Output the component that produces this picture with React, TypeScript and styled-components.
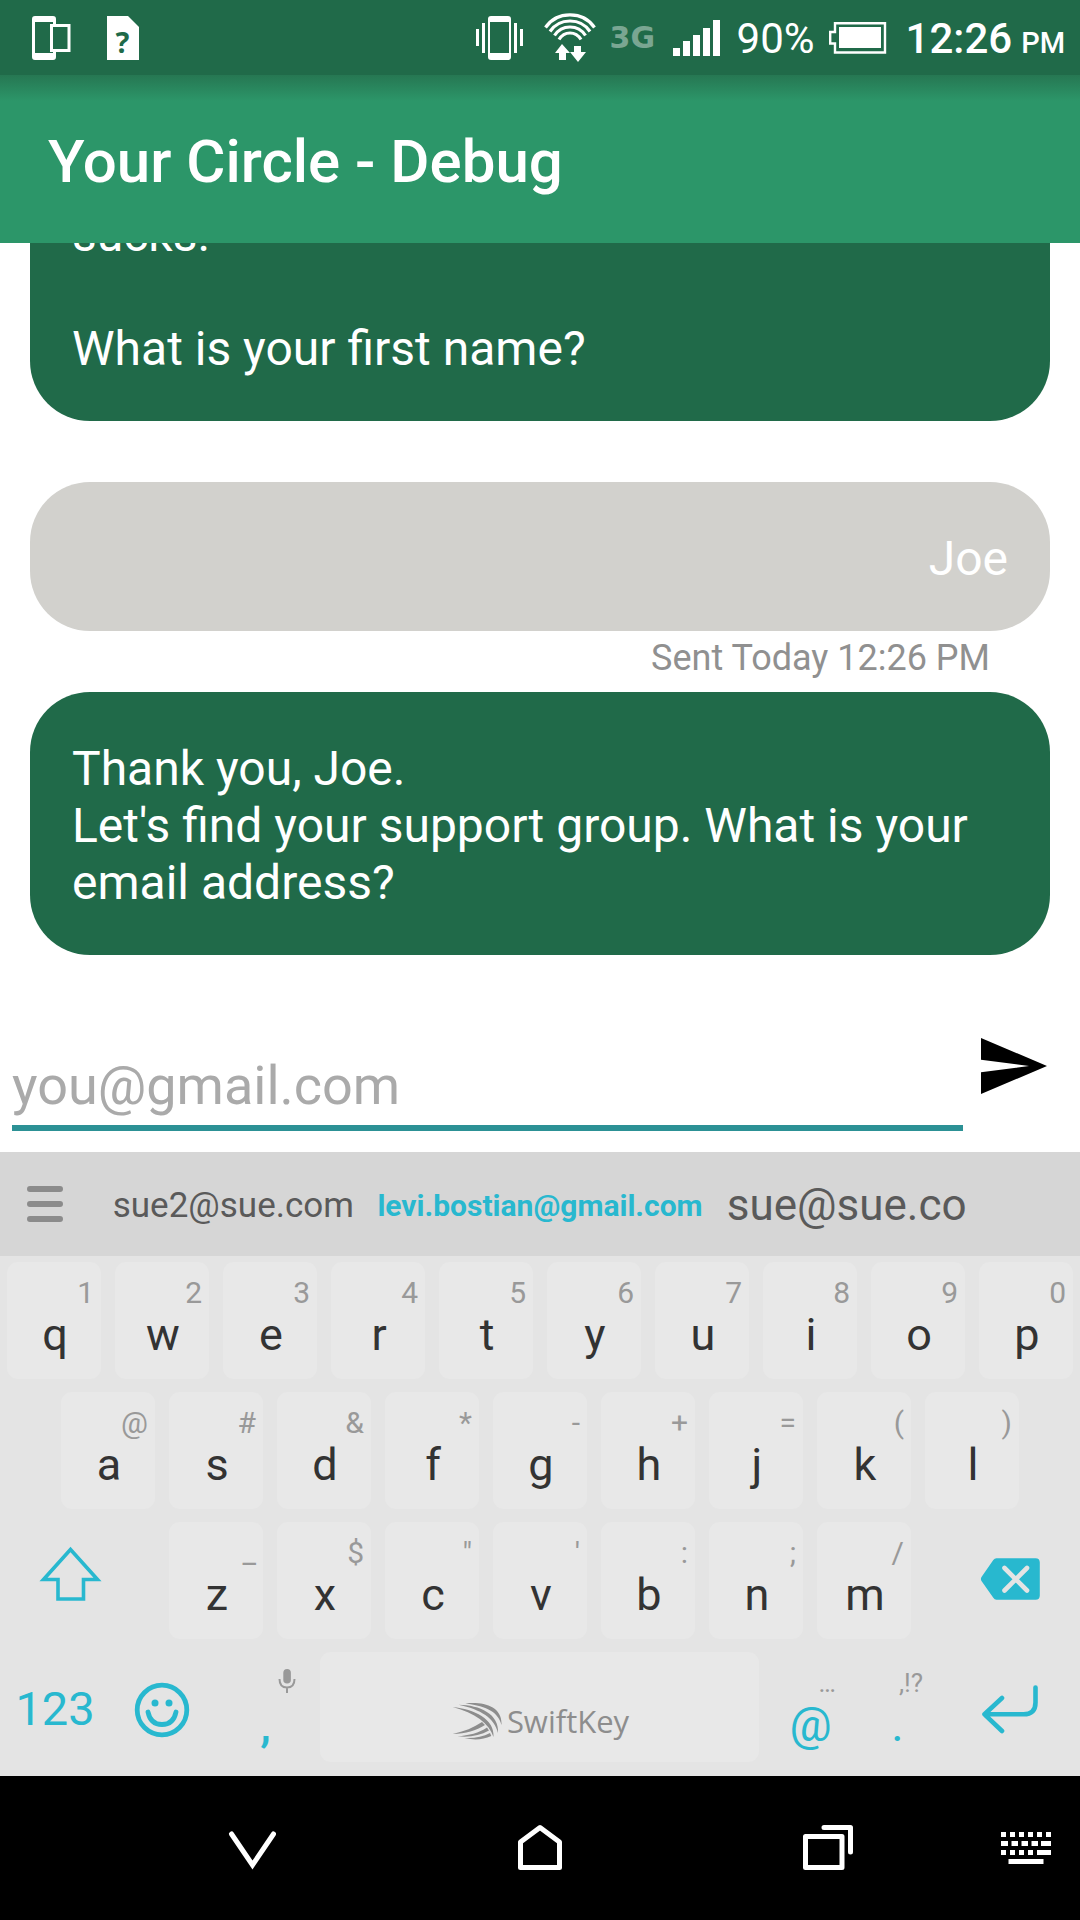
import React from "react";
import styled, { createGlobalStyle } from "styled-components";

const color = {
  statusBar: "#206a49",
  appBar: "#2c9669",
  bubble: "#206a49",
  reply: "#d2d1cd",
  meta: "#909090",
  underline: "#2c9195",
  placeholder: "#aaaaaa",
  suggestions: "#d6d6d6",
  board: "#e4e4e4",
  key: "#e8e8e8",
  letter: "#333333",
  hint: "#999999",
  accent: "#28b8cf",
};

const GlobalStyle = createGlobalStyle`
  *, *::before, *::after { box-sizing: border-box; }
  body { margin: 0; font-family: Roboto, "Liberation Sans", sans-serif; background: #fff; }
  button, input { font: inherit; border: 0; padding: 0; background: none; color: inherit; }
  svg { display: block; flex: none; }
`;

const Screen = styled.div`
  display: flex;
  flex-direction: column;
  height: 100vh;
  overflow: hidden;
`;

const StatusBar = styled.div`
  display: flex;
  flex: none;
  align-items: center;
  justify-content: space-between;
  height: 75px;
  padding: 0 15px 0 32px;
  background: ${color.statusBar};
  color: #fff;
`;

const StatusGroup = styled.div<{ $gap: number }>`
  display: flex;
  align-items: center;
  gap: ${(p) => p.$gap}px;
`;

const Network = styled.span`
  width: 49px;
  font: bold 30px "DejaVu Sans", sans-serif;
  color: rgba(255, 255, 255, 0.42);
`;

const Percent = styled.span`
  padding-top: 3px;
  font-size: 42px;
  line-height: 48px;
`;

const Clock = styled.time`
  padding-top: 3px;
  font-size: 42px;
  line-height: 48px;
  font-weight: 500;
`;

const Meridiem = styled.small`
  margin-left: 9px;
  font-size: 29px;
  line-height: 30px;
`;

const AppBar = styled.header`
  display: flex;
  flex: none;
  align-items: center;
  height: 168px;
  padding: 6px 48px 0;
  background: linear-gradient(rgba(32, 88, 60, 0.5), rgba(32, 88, 60, 0) 26px) ${color.appBar};
`;

const Title = styled.h1`
  margin: 0;
  font-size: 60px;
  line-height: 70px;
  font-weight: 500;
  color: #fff;
`;

const Chat = styled.main`
  display: flex;
  flex: 1 1 0;
  flex-direction: column;
  justify-content: flex-end;
  min-height: 0;
  padding: 0 30px;
  overflow: hidden;
`;

const Message = styled.article`
  flex: none;
`;

const Bubble = styled.p<{ $own?: boolean }>`
  margin: 0;
  padding: 48px 42px 44px;
  border-radius: 60px;
  background: ${(p) => (p.$own ? color.reply : color.bubble)};
  color: #fff;
  font-size: 48px;
  line-height: 57px;
  text-align: ${(p) => (p.$own ? "right" : "left")};
  white-space: pre-line;
`;

const Meta = styled.div`
  height: 61px;
  padding: 6px 60px 0;
  font-size: 36px;
  line-height: 42px;
  text-align: right;
  color: ${color.meta};
`;

const Composer = styled.form`
  display: flex;
  flex: none;
  align-items: flex-start;
  height: 136px;
  padding: 0 16px 21px 12px;
`;

const EmailInput = styled.input`
  flex: 1;
  min-width: 0;
  height: 115px;
  padding: 32px 0 2px;
  border-bottom: 6px solid ${color.underline};
  border-radius: 0;
  outline: 0;
  font-size: 54px;
  color: #222;
  &::placeholder {
    color: ${color.placeholder};
    opacity: 1;
  }
`;

const SendButton = styled.button`
  display: flex;
  align-items: center;
  justify-content: center;
  width: 101px;
  height: 100px;
`;

const SuggestionBar = styled.div`
  display: flex;
  flex: none;
  align-items: center;
  height: 104px;
  padding-right: 80px;
  background: ${color.suggestions};
`;

const MenuButton = styled.button`
  display: flex;
  justify-content: center;
  width: 80px;
  padding-left: 10px;
`;

const Suggestion = styled.button<{ $size: number; $primary?: boolean }>`
  display: flex;
  flex: 1 1 0;
  justify-content: center;
  min-width: 0;
  padding-top: 2px;
  font-size: ${(p) => p.$size}px;
  font-weight: ${(p) => (p.$primary ? 700 : 400)};
  color: ${(p) => (p.$primary ? color.accent : "#5a5a5a")};
`;

const Board = styled.section`
  flex: none;
  background: ${color.board};
`;

const Row = styled.div<{ $inset?: boolean; $last?: boolean }>`
  display: flex;
  height: 130px;
  padding: ${(p) => `6px ${p.$inset ? "5%" : "0"} ${p.$last ? 14 : 7}px`};
`;

const Cell = styled.div<{ $units: number }>`
  display: flex;
  flex: ${(p) => p.$units} 1 0;
  min-width: 0;
`;

const Spacer = styled.div`
  flex: 22 1 0;
`;

const Key = styled.button<{ $flat?: boolean }>`
  position: relative;
  display: flex;
  flex: 1;
  align-items: center;
  justify-content: center;
  min-width: 0;
  margin: 0 7px;
  padding-left: 2px;
  border-radius: 11px;
  background: ${(p) => (p.$flat ? "transparent" : color.key)};
`;

const Letter = styled.span<{ $accent?: boolean }>`
  align-self: flex-start;
  padding-top: 46px;
  font-size: ${(p) => (p.$accent ? 47 : 45)}px;
  line-height: 54px;
  color: ${(p) => (p.$accent ? color.accent : color.letter)};
`;

const CommaLetter = styled(Letter)`
  font-weight: 500;
`;

const Hint = styled.span<{ $small?: boolean }>`
  position: absolute;
  top: 13px;
  right: ${(p) => (p.$small ? 10 : 7)}px;
  font-size: ${(p) => (p.$small ? 26 : 30)}px;
  line-height: 36px;
  color: ${color.hint};
`;

const MicHint = styled(Hint)`
  top: 17px;
`;

const ModeLabel = styled.span`
  padding-top: 4px;
  font-size: 47px;
  line-height: 54px;
  color: ${color.accent};
`;

const Brand = styled.span`
  display: flex;
  align-items: center;
  gap: 5px;
  padding-top: 27px;
  font-family: "Open Sans", "Noto Sans", sans-serif;
  font-size: 31px;
  line-height: 38px;
  color: #8d8d8d;
`;

const NavBar = styled.nav`
  display: flex;
  flex: none;
  height: 144px;
  padding-left: 10%;
  background: #000;
`;

const NavButton = styled.button<{ $units: number }>`
  display: flex;
  flex: ${(p) => p.$units} 1 0;
  align-items: center;
  justify-content: center;
`;

const DevicesIcon = () => (
  <svg width="39" height="44" viewBox="0 0 39 44" fill="none" stroke="#fff">
    <path fill="#fff" stroke="none" fillRule="evenodd" d="M3 0h18q3 0 3 3v5h-3V6H3v31h18v-2h3v6q0 3-3 3H3q-3 0-3-3V3q0-3 3-3Z" />
    <rect x="19.5" y="9.500" width="17.500" height="25" strokeWidth="3" />
  </svg>
);

const UnknownFileIcon = () => (
  <svg width="32" height="44" viewBox="0 0 32 44">
    <path fill="#fff" d="M0 0h21l11 11v33H0Z" />
    <text x="15.500" y="37" textAnchor="middle" fontFamily="Noto Sans" fontWeight="700" fontSize="29" fill={color.statusBar}>?</text>
  </svg>
);

const VibrateIcon = () => (
  <svg width="54" height="44" viewBox="0 0 54 44" fill="#fff">
    <path fillRule="evenodd" d="M15 0h17q3 0 3 3v38q0 3-3 3H15q-3 0-3-3V3q0-3 3-3Zm-1 6v31h19V6Z" />
    <path d="M0 13h3v17H0ZM6 7h3v30H6ZM38 7h3v30h-3ZM44 13h3v17h-3Z" />
  </svg>
);

const WifiIcon = () => (
  <svg width="52" height="50" viewBox="0 0 52 50" fill="none" stroke="#fff" strokeWidth="3.200">
    <path d="M1.500 14.500Q10 1.800 26 1.800T50.500 14.500" />
    <path d="M6 18.500Q13 8 26 8T46 18.500" />
    <path d="M10.500 22.500Q16 14 26 14T41.500 22.500" />
    <path d="M15 26.500Q19 20 26 20T37 26.500" />
    <path fill="#fff" stroke="none" d="M18 31l8 9h-4v7h-7v-7h-4ZM30 33h7v6h5l-8 10-8-10h4Z" />
  </svg>
);

const SignalIcon = () => (
  <svg width="50" height="36" viewBox="0 0 50 36" fill="#fff">
    <path d="M0 28h7v8H0ZM10 21h7v15h-7ZM20 15h7v21h-7ZM30 8h7v28h-7ZM40 0h7v36h-7Z" />
  </svg>
);

const BatteryIcon = () => (
  <svg width="63" height="32" viewBox="0 0 63 32">
    <path fill="none" stroke="#fff" strokeWidth="2.400" d="M6 1.200H56V30.500H6V21.500H1.200V10H6Z" />
    <path fill="#fff" d="M10 5h42v21H10Z" />
  </svg>
);

const SendIcon = () => (
  <svg width="66" height="56" viewBox="0 0 66 56">
    <path fill="#000" d="M0 0L66 28 0 56V34.200L48 28 0 21.800Z" />
  </svg>
);

const MenuIcon = () => (
  <svg width="36" height="36" viewBox="0 0 36 36" stroke="#8b8b8b" strokeWidth="6" strokeLinecap="round">
    <path d="M3 3H33M3 18H33M3 33H33" />
  </svg>
);

const ShiftIcon = () => (
  <svg width="72" height="72" viewBox="0 0 72 72" fill="none" stroke={color.accent} strokeWidth="3.600">
    <path d="M35.500 4.500L62.500 34.500H48.500V54H23V34.500H8.500Z" />
  </svg>
);

const BackspaceIcon = () => (
  <svg width="72" height="72" viewBox="0 0 72 72">
    <path fill={color.accent} d="M21.500 13.300H60.500q4.300 0 4.300 4.300V50.500q0 4.200-4.300 4.200H21.500q-2 0-3.200-2L6.500 36q-1.200-2 0-4L18.300 15q1.200-1.700 3.200-1.700Z" />
    <path stroke={color.board} strokeWidth="4.600" strokeLinecap="round" d="M29.500 23L52 45.500M52 23L29.500 45.500" />
  </svg>
);

const SmileyIcon = () => (
  <svg width="72" height="72" viewBox="0 0 72 72" fill="none" stroke={color.accent} strokeWidth="4.800" strokeLinecap="round">
    <circle cx="35" cy="39" r="24.800" />
    <path d="M21 41Q23.500 53.500 35 53.500T49 41" />
    <g fill={color.accent} stroke="none">
      <circle cx="28" cy="32" r="3.500" />
      <circle cx="42" cy="32" r="3.500" />
    </g>
  </svg>
);

const EnterIcon = () => (
  <svg width="72" height="72" viewBox="0 0 72 72" fill="none" stroke={color.accent} strokeWidth="4.600" strokeLinecap="round" strokeLinejoin="round">
    <path d="M60.500 16.500V31.500Q60.500 43.300 48.500 43.300H9.500M27 27L9.500 43.300L27 60" />
  </svg>
);

const MicIcon = () => (
  <svg width="18" height="24" viewBox="0 0 18 24">
    <rect x="5.300" y="0" width="7.600" height="14.500" rx="3.800" fill={color.hint} />
    <path fill="none" stroke={color.hint} strokeWidth="2" d="M1.500 10Q1.500 18.500 9 18.500T16.500 10M9 18V24" />
  </svg>
);

const SwiftKeyLogo = () => (
  <svg width="50" height="38" viewBox="0 0 50 38" fill="#8d8d8d">
    <path d="M13.300 1.500C31-.5 50.500 4 49.500 23C46.500 11 36 4 13.300 1.500Z" />
    <path d="M6.500 2.700C28 3 47.500 12 46 31C42.500 16 29 7.500 6.500 2.700Z" />
    <path d="M.7 5C22 7 43 17 41.500 35C37 21 23 11 .7 5Z" />
    <path d="M.7 32C12 29.500 22 25.500 30 20L33 23C24 28.500 14 31.500 .7 32Z" />
    <path d="M5.500 34.300C17 33.500 27 31 35 25.500L37 28.500C28 33.500 18 35.500 5.500 34.300Z" />
    <path d="M12.500 36C22 36.500 31 35 38 31L39.300 34C31 37.500 23 38.500 12.500 36Z" />
  </svg>
);

const BackIcon = () => (
  <svg width="48" height="48" viewBox="0 0 48 48" fill="none" stroke="#fff" strokeWidth="5" strokeLinecap="round">
    <path d="M3.500 10L24.500 41L45.500 10" />
  </svg>
);

const HomeIcon = () => (
  <svg width="48" height="48" viewBox="0 0 48 48" fill="none" stroke="#fff" strokeWidth="5" strokeLinejoin="round">
    <path d="M4.500 18L24 3.500L43.500 18V43.500H4.500Z" />
  </svg>
);

const RecentsIcon = () => (
  <svg width="50" height="48" viewBox="0 0 50 48" fill="none" stroke="#fff" strokeWidth="5" strokeLinejoin="round" strokeLinecap="round">
    <path d="M2.500 12.500H39V43.500H2.500Z" />
    <path d="M21 3.500H47.500V28" />
  </svg>
);

const KeyboardIcon = () => (
  <svg width="50" height="34" viewBox="0 0 50 34" fill="#fff">
    <path d="M0 1h5v5H0ZM9 1h5v5H9ZM18 1h5v5h-5ZM27 1h5v5h-5ZM36 1h5v5h-5ZM45 1h5v5h-5Z" />
    <path d="M0 10h7v5H0ZM10.500 10h6.500v5h-6.500ZM20.500 10h6.500v5h-6.500ZM30.500 10h6.500v5h-6.500ZM40 10h10v5H40Z" />
    <path d="M0 19h5v5H0ZM9 19h5v5H9ZM18 19h5v5h-5ZM27 19h5v5h-5ZM36 19h14v5H36ZM7.500 28h35v5h-35Z" />
  </svg>
);

type KeyPair = [letter: string, hint: string];

const topKeys: KeyPair[] = [
  ["q", "1"], ["w", "2"], ["e", "3"], ["r", "4"], ["t", "5"],
  ["y", "6"], ["u", "7"], ["i", "8"], ["o", "9"], ["p", "0"],
];
const homeKeys: KeyPair[] = [
  ["a", "@"], ["s", "#"], ["d", "&"], ["f", "*"], ["g", "-"],
  ["h", "+"], ["j", "="], ["k", "("], ["l", ")"],
];
const bottomKeys: KeyPair[] = [
  ["z", "_"], ["x", "$"], ["c", "\""], ["v", "'"], ["b", ":"], ["n", ";"], ["m", "/"],
];

const LetterKeys = ({ keys }: { keys: KeyPair[] }) => (
  <>
    {keys.map(([letter, hint]) => (
      <Cell key={letter} $units={108}>
        <Key type="button">
          <Letter>{letter}</Letter>
          <Hint>{hint}</Hint>
        </Key>
      </Cell>
    ))}
  </>
);

const Keyboard = () => (
  <Board aria-label="Keyboard">
    <Row><LetterKeys keys={topKeys} /></Row>
    <Row $inset><LetterKeys keys={homeKeys} /></Row>
    <Row>
      <Cell $units={140}><Key type="button" $flat aria-label="Shift"><ShiftIcon /></Key></Cell>
      <Spacer />
      <LetterKeys keys={bottomKeys} />
      <Spacer />
      <Cell $units={140}><Key type="button" $flat aria-label="Backspace"><BackspaceIcon /></Key></Cell>
    </Row>
    <Row $last>
      <Cell $units={108}><Key type="button" $flat><ModeLabel>123</ModeLabel></Key></Cell>
      <Cell $units={108}><Key type="button" $flat aria-label="Emoji"><SmileyIcon /></Key></Cell>
      <Cell $units={97}>
        <Key type="button" $flat>
          <CommaLetter $accent>,</CommaLetter>
          <MicHint $small><MicIcon /></MicHint>
        </Key>
      </Cell>
      <Cell $units={453}>
        <Key type="button"><Brand><SwiftKeyLogo />SwiftKey</Brand></Key>
      </Cell>
      <Cell $units={87}>
        <Key type="button" $flat>
          <Letter $accent>@</Letter>
          <Hint $small>…</Hint>
        </Key>
      </Cell>
      <Cell $units={87}>
        <Key type="button" $flat>
          <Letter $accent>.</Letter>
          <Hint $small>,!?</Hint>
        </Key>
      </Cell>
      <Cell $units={140}><Key type="button" $flat aria-label="Enter"><EnterIcon /></Key></Cell>
    </Row>
  </Board>
);

export default function App() {
  return (
    <Screen>
      <GlobalStyle />
      <StatusBar>
        <StatusGroup $gap={36}>
          <DevicesIcon />
          <UnknownFileIcon />
        </StatusGroup>
        <StatusGroup $gap={14}>
          <VibrateIcon />
          <WifiIcon />
          <Network>3G</Network>
          <SignalIcon />
          <Percent>90%</Percent>
          <BatteryIcon />
          <Clock>12:26<Meridiem>PM</Meridiem></Clock>
        </StatusGroup>
      </StatusBar>
      <AppBar>
        <Title>Your Circle - Debug</Title>
      </AppBar>
      <Chat>
        <Message>
          <Bubble>{"sucks.\n\nWhat is your first name?"}</Bubble>
          <Meta />
        </Message>
        <Message>
          <Bubble $own>Joe</Bubble>
          <Meta>Sent Today 12:26 PM</Meta>
        </Message>
        <Message>
          <Bubble>{"Thank you, Joe.\nLet's find your support group. What is your email address?"}</Bubble>
          <Meta />
        </Message>
      </Chat>
      <Composer onSubmit={(e) => e.preventDefault()}>
        <EmailInput type="email" aria-label="Email address" placeholder="you@gmail.com" />
        <SendButton type="submit" aria-label="Send"><SendIcon /></SendButton>
      </Composer>
      <SuggestionBar>
        <MenuButton type="button" aria-label="Menu"><MenuIcon /></MenuButton>
        <Suggestion type="button" $size={35}>sue2@sue.com</Suggestion>
        <Suggestion type="button" $size={30} $primary>levi.bostian@gmail.com</Suggestion>
        <Suggestion type="button" $size={44}>sue@sue.co</Suggestion>
      </SuggestionBar>
      <Keyboard />
      <NavBar aria-label="System">
        <NavButton $units={288} type="button" aria-label="Back"><BackIcon /></NavButton>
        <NavButton $units={288} type="button" aria-label="Home"><HomeIcon /></NavButton>
        <NavButton $units={288} type="button" aria-label="Recent apps"><RecentsIcon /></NavButton>
        <NavButton $units={108} type="button" aria-label="Switch keyboard"><KeyboardIcon /></NavButton>
      </NavBar>
    </Screen>
  );
}
